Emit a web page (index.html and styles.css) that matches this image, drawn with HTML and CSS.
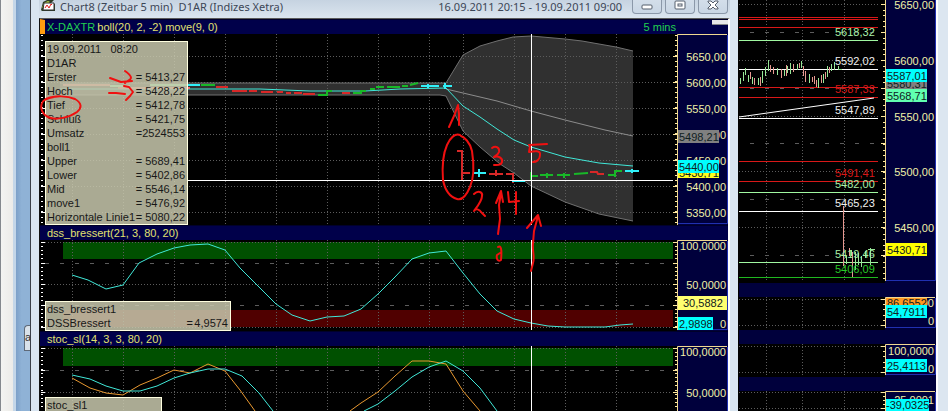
FILE: index.html
```
<!DOCTYPE html>
<html lang="de">
<head>
  <meta charset="UTF-8">
  <meta name="viewport" content="width=device-width, initial-scale=1.0">
  <title>Chart8</title>
  <link rel="stylesheet" href="styles.css">
</head>
<body>
  <div class="side-window"></div>
  <div class="desktop-gap"><span class="desktop-tab">a</span></div>

  <main class="chart-window">
    <header class="titlebar">
      <svg class="app-icon" width="16" height="12" viewBox="0 0 16 12">
        <path d="M1 10L3 2L7 0H14L11 3L15 4V11H2Z" fill="#2c3a24"/>
        <path d="M2 8L4 3L8 1L10 2L6 5Z" fill="#b9d84a"/>
        <path d="M4 3H14V10H3Z" fill="#fff" stroke="#333"/>
        <path d="M5 8L7 5L9 8L11 4L12 5" fill="none" stroke="#e02020"/>
      </svg>
      <h1 class="title">Chart8 (Zeitbar 5 min)&nbsp; D1AR (Indizes Xetra)</h1>
      <span class="range">16.09.2011 20:15 - 19.09.2011 09:00</span>
      <div class="window-buttons">
        <button class="window-btn" aria-label="Minimieren">
          <svg width="12" height="12" viewBox="0 0 12 12"><rect x="1" y="5" width="10" height="4" rx="1" fill="#fff" stroke="#555e6c"/></svg>
        </button>
        <button class="window-btn" aria-label="Maximieren">
          <svg width="12" height="12" viewBox="0 0 12 12"><rect x="1" y="1" width="10" height="8" rx="1" fill="#fff" stroke="#555e6c"/><rect x="4" y="4" width="4" height="2" fill="#fff" stroke="#555e6c"/></svg>
        </button>
        <button class="window-btn" aria-label="Schließen">
          <svg width="12" height="12" viewBox="0 0 12 12"><path d="M1 1H4L6 3L8 1H11V2L8 5L11 8V9H8L6 7L4 9H1V8L4 5L1 2Z" fill="#fff" stroke="#555e6c"/></svg>
        </button>
      </div>
    </header>

    <div class="workspace">
      <div class="panel-head panel-head-main">
        <span class="symbol">X-DAXTR</span>
        <span>boll(20, 2, -2) move(9, 0)</span>
        <span class="interval">5 mins</span>
        <span class="grip"></span>
      </div>
      <section class="panel">
        <svg class="plot" height="191" viewBox="40 34 637 191" preserveAspectRatio="none">
          <path class="band" d="M60 83H446L463 55L480 46L497 41L513 37L531 36L565 39L582 41L616 47L633 51V221L599 214L565 202L531 186L514 173L500 164L480 147L463 131L446 96L440 95H60Z"/>
          <path class="grid" d="M45 56.5H672M45 82.5H672M45 108.5H672M45 134.5H672M45 160.5H672M45 186.5H672M45 212.5H672"/>
          <path class="grid" d="M72.5 34V224M123.5 34V224M174.5 34V224M225.5 34V224M276.5 34V224M327.5 34V224M378.5 34V224M429.5 34V224M463.5 34V224M514.5 34V224M565.5 34V224M616.5 34V224"/>
          <path class="band-line" d="M60 83H446L463 55L480 46L497 41L513 37L531 36L565 39L582 41L616 47L633 51"/>
          <path class="band-line" d="M60 95H440L446 96L463 131L480 147L500 164L514 173L531 186L565 202L599 214L633 221"/>
          <path class="mid-line" d="M446 89L497 101L531 111L565 120L605 130L633 136"/>
          <path class="cyan" d="M60 89H260L310 91H365L400 89L446 88L463 106L480 117L497 129L514 140L531 147L565 157L599 163L633 166"/>
          <path d="M63 85H110M118 88H190" fill="none" stroke="#f07070" stroke-width="2"/>
          <path d="M110 86H130M150 85H188" fill="none" stroke="#80ffb0" stroke-width="2"/>
          <path class="bar-red" d="M216 87H228M232 91H240M240 91H247M249 91H257M261 92H273M277 92H283M286 93H291M294 93H302M303 94H315M342 93H350"/>
          <path class="bar-green" d="M201 85H215M318 95H327V91H332M353 93H361V91H366M370 89H375M376 87H384M387 87H400M402 86H408M410 85L418 83"/>
          <path class="bar-cyan" d="M188 85H200M421 86H439M443 86H452M428 84V88M445 83V89"/>
          <path class="bar-red" d="M457 151H463M462 151V180M463 173H470M489 174H503M496 170V176M506 174H513V183M590 172H597L598 174H604"/>
          <path class="bar-cyan" d="M473 173H486M479 169V177M512 181H525M625 171H639M632 169V173"/>
          <path class="bar-green" d="M531 180V172M531 176H538M540 175H553M547 173V178M557 175H570M564 173V178M574 174L588 173M608 175H615V171H622M615 170V177"/>
          <path class="white-line" d="M188 180.5H673"/>
          <path class="cursor" d="M531.5 34V225"/>
          <path class="tick tick-main" d="M42 35V225"/>
          <path class="tick" d="M41 56.5H45M41 82.5H45M41 108.5H45M41 134.5H45M41 160.5H45M41 186.5H45M41 212.5H45"/>
          <path class="tick-r tick-main" d="M676 35V225"/>
          <path class="tick-r" d="M673 56.5H677M673 82.5H677M673 108.5H677M673 134.5H677M673 160.5H677M673 186.5H677M673 212.5H677"/>
        </svg>
        <svg class="axis" width="51" height="191" viewBox="677 34 51 191">
          <path class="axis-frame" d="M677.5 225V34.5H727"/>
          <path class="axis-edge" d="M678 223.5H727.5V35"/>
          <text x="726" y="61">5650,00</text>
          <text x="726" y="87">5600,00</text>
          <text x="726" y="113">5550,00</text>
          <text x="726" y="139">5500,00</text>
          <text x="726" y="165">5450,00</text>
          <text x="726" y="191">5400,00</text>
          <text x="726" y="217">5350,00</text>
          <rect class="tag-gray" x="678" y="130" width="41" height="13"/>
          <text class="tag-text" x="679" y="141">5498,21</text>
          <rect class="tag-yellow" x="678" y="166" width="41" height="12"/>
          <text class="tag-text" x="679" y="177">5430,71</text>
          <rect class="tag-cyan" x="678" y="160" width="41" height="13"/>
          <text class="tag-text" x="679" y="171">5440,00</text>
        </svg>
        <table class="legend">
          <tr><td colspan="3">19.09.2011 &nbsp; 08:20</td></tr>
          <tr><td colspan="3">D1AR</td></tr>
          <tr><th>Erster</th><td>=</td><td>5413,27</td></tr>
          <tr><th>Hoch</th><td>=</td><td>5428,22</td></tr>
          <tr><th>Tief</th><td>=</td><td>5412,78</td></tr>
          <tr><th>Schluß</th><td>=</td><td>5421,75</td></tr>
          <tr><th>Umsatz</th><td>=</td><td>2524553</td></tr>
          <tr><td colspan="3">boll1</td></tr>
          <tr><th>Upper</th><td>=</td><td>5689,41</td></tr>
          <tr><th>Lower</th><td>=</td><td>5402,86</td></tr>
          <tr><th>Mid</th><td>=</td><td>5546,14</td></tr>
          <tr><th>move1</th><td>=</td><td>5476,92</td></tr>
          <tr><th>Horizontale Linie1</th><td>=</td><td>5080,22</td></tr>
        </table>
      </section>

      <div class="panel-head"><span>dss_bressert(21, 3, 80, 20)</span></div>
      <section class="panel">
        <svg class="plot" height="91" viewBox="40 240 637 91" preserveAspectRatio="none">
          <rect class="zone-high" x="63" y="242" width="610" height="17"/>
          <rect class="zone-low" x="63" y="310" width="610" height="17"/>
          <path class="grid" d="M45 242.5H672M45 284.5H672M45 327.5H672M72.5 240V330M123.5 240V330M174.5 240V330M225.5 240V330M276.5 240V330M327.5 240V330M378.5 240V330M429.5 240V330M463.5 240V330M514.5 240V330M565.5 240V330M616.5 240V330"/>
          <path class="grid-dash" d="M45 263.5H672M45 305.5H672"/>
          <path class="cyan" d="M72 275L88 280L106 289L123 285L139 263L157 254L174 248L190 245L208 244L225 250L240 268L259 287L276 304L292 315L310 321L327 317L344 316L361 309L378 294L395 277L412 259L429 253L446 251L463 273L480 294L497 311L514 319L531 323L548 326L565 327H605L620 325L633 324"/>
          <path class="cursor" d="M531.5 240V330"/>
          <path class="tick tick-sub" d="M42 242V330"/>
          <path class="tick" d="M41 242.5H45M41 263.5H45M41 284.5H45M41 305.5H45M41 327.5H45"/>
          <path class="tick-r tick-sub" d="M676 242V330"/>
          <path class="tick-r" d="M673 242.5H677M673 263.5H677M673 284.5H677M673 305.5H677M673 327.5H677"/>
        </svg>
        <svg class="axis" width="51" height="91" viewBox="677 240 51 91">
          <path class="axis-frame" d="M677.5 330V240.5H727"/>
          <path class="axis-edge" d="M678 329.5H727.5V241"/>
          <text x="726" y="250">100,0000</text>
          <text x="726" y="289">50,0000</text>
          <text x="726" y="328">0</text>
          <rect class="tag-pale" x="678" y="296" width="49" height="14"/>
          <text class="tag-text" x="683" y="307">30,5882</text>
          <rect class="tag-cyan" x="678" y="317" width="35" height="13"/>
          <text class="tag-text" x="679" y="328">2,9898</text>
        </svg>
        <table class="legend legend-dss">
          <tr><td colspan="3">dss_bressert1</td></tr>
          <tr><th>DSSBressert</th><td>=</td><td>4,9574</td></tr>
        </table>
      </section>

      <div class="panel-head"><span>stoc_sl(14, 3, 3, 80, 20)</span></div>
      <section class="panel">
        <svg class="plot" height="65" viewBox="40 346 637 65" preserveAspectRatio="none">
          <rect class="zone-high" x="63" y="348" width="610" height="18"/>
          <path class="grid" d="M45 348.5H672M45 392.5H672M72.5 346V411M123.5 346V411M174.5 346V411M225.5 346V411M276.5 346V411M327.5 346V411M378.5 346V411M429.5 346V411M463.5 346V411M514.5 346V411M565.5 346V411M616.5 346V411"/>
          <path class="grid-dash" d="M45 370.5H672"/>
          <path class="orange" d="M72 378L90 388L106 393L123 395L140 385L157 378L174 370L190 373L208 364L225 371L240 390L255 411M350 411L361 403L378 392L395 376L412 361H429L446 364L463 391L480 411"/>
          <path class="cyan" d="M72 375L90 379L106 386L123 391H140L157 386L174 378L190 373L208 369H225L242 376L259 393L273 411M364 411L378 404L395 391L412 377L429 367L446 361L463 371L480 388L497 411"/>
          <path class="cursor" d="M531.5 346V411"/>
          <path class="tick tick-sub" d="M42 348V411"/>
          <path class="tick" d="M41 348.5H45M41 370.5H45M41 392.5H45"/>
          <path class="tick-r tick-sub" d="M676 348V411"/>
          <path class="tick-r" d="M673 348.5H677M673 370.5H677M673 392.5H677"/>
        </svg>
        <svg class="axis" width="51" height="65" viewBox="677 346 51 65">
          <path class="axis-frame" d="M677.5 411V346.5H727"/>
          <path class="axis-edge" d="M727.5 347V411"/>
          <text x="726" y="356">100,0000</text>
          <text x="726" y="397">50,0000</text>
        </svg>
        <table class="legend legend-stoc">
          <tr><td>stoc_sl1</td></tr>
        </table>
      </section>

      <!-- freehand notes, drawn across all panels -->
      <svg class="notes" viewBox="40 19 637 392" preserveAspectRatio="none">
        <path d="M110 78L121 82L132 81M125 71C128 73 131 76 131 78C131 80 127 81 125 83"/>
        <path d="M109 93L116 93L125 94M124 86L129 87L133 92L130 96L126 100"/>
        <path d="M46 99C55 95 68 96 75 99C82 103 82 108 77 112C70 117 56 121 48 117C42 114 40 108 42 103C43 100 48 98 54 97"/>
        <path d="M449 127L454 116L458 105L459 114V125"/>
        <path d="M461 136C464 137 470 142 472 151C474 164 474 178 470 187C467 194 463 201 457 199C450 197 445 190 443 180C442 167 443 154 447 145C450 138 455 133 460 135"/>
        <path d="M492 148C496 145 500 148 499 152C498 155 495 156 494 157C499 155 503 159 502 162C501 166 496 165 494 165"/>
        <path d="M529 145L547 144M530 146L529 152C534 151 541 150 540 155C540 160 536 162 533 162"/>
        <path d="M474 194C478 190 483 192 482 196C482 201 477 207 474 211C476 208 479 209 482 213L485 216"/>
        <path d="M508 192L509 202L519 201M516 192L516 214"/>
        <path d="M496 203L501 191L503 202M501 193L499 205L500 219L498 234"/>
        <path d="M527 228L538 215L541 226M538 216L534 231L533 243C532 250 535 257 533 263L531 271"/>
        <path d="M498 247C501 245 502 249 501 260C498 262 496 259 497 255L500 253"/>
      </svg>
    </div>
  </main>

  <aside class="daily-window">
    <section class="panel">
      <svg class="level-plot" width="146" height="283" viewBox="739 0 146 283">
        <path class="grid" d="M739 4.5H880M739 60.5H880M739 116.5H880M739 171.5H880M739 227.5H880M766.5 0V281M802.5 0V281M844.5 0V281"/>
        <path class="grid-dash" d="M750 32.5H880M750 88.5H880M750 143.5H880M750 199.5H880M750 255.5H880"/>
        <path class="level-red" d="M739 17.5H878M739 19.5H878M739 27.5H878M739 87.5H878M739 97.5H878M739 161.5H878M739 181.5H878"/>
        <path class="level-white" d="M739 69.5H878M739 118.5H878M739 117L874 98M739 211.5H878"/>
        <path class="level-mint" d="M739 40.5H878M739 192.5H878M739 262.5H878"/>
        <path class="level-green" d="M739 277.5H878"/>
        <path class="bar-mint" d="M740.5 84V78M743.5 81V72M745.5 75V68M748.5 82V75M752.5 84V77M758.5 85V78M762.5 83V71M765.5 76V67M768.5 71V60M777.5 75V68M784.5 76V70M787.5 73V66M790.5 74V63M797.5 70V64M801.5 68V61M809.5 83V74M818.5 88V78M823.5 83V74M827.5 77V66M831.5 71V64M834.5 70V62M838.5 70V66M842 69.5H838"/>
        <path class="bar-pink" d="M750.5 79V72M754.5 85V78M760.5 86V77M770.5 72V65M773.5 74V67M781.5 78V69M786.5 76V65M793.5 72V64M799.5 68V63M803.5 76V66M805.5 82V71M812.5 82V77M814.5 84V76M816.5 87V80M821.5 83V75M825.5 79V72M829.5 73V67M843.5 206V266M849.5 256V248M852.5 277V252"/>
        <path class="bar-mint" d="M846.5 256V264M851.5 250V256M855.5 252V270M858.5 253V265M861.5 256V267M865.5 251V258M870.5 248V265M868 249.5H875"/>
        <text class="lvl lvl-mint" x="835" y="36">5618,32</text>
        <text class="lvl lvl-white" x="835" y="65">5592,02</text>
        <text class="lvl lvl-red" x="835" y="93">5587,33</text>
        <text class="lvl lvl-white" x="835" y="114">5547,89</text>
        <text class="lvl lvl-red" x="835" y="177">5491,41</text>
        <text class="lvl lvl-mint" x="835" y="188">5482,00</text>
        <text class="lvl lvl-white" x="835" y="207">5465,23</text>
        <text class="lvl lvl-mint" x="835" y="258">5419,46</text>
        <text class="lvl lvl-green" x="835" y="273">5406,09</text>
        <path class="tick-r tick-day" d="M884 4V281"/>
        <path class="tick-r" d="M881 4.5H885M881 32.5H885M881 60.5H885M881 88.5H885M881 116.5H885M881 143.5H885M881 171.5H885M881 199.5H885M881 227.5H885M881 255.5H885"/>
      </svg>
      <svg class="axis" width="51" height="283" viewBox="885 0 51 283">
        <path class="axis-frame" d="M885.5 0V281"/>
        <path class="axis-edge" d="M886 280.5H935.5V0"/>
        <text x="934" y="9">5650,00</text>
        <text x="934" y="65">5600,00</text>
        <text x="934" y="121">5550,00</text>
        <text x="934" y="176">5500,00</text>
        <text x="934" y="232">5450,00</text>
        <rect class="tag-gray" x="886" y="76" width="41" height="13"/>
        <text class="tag-text" x="887" y="88">5580,31</text>
        <rect class="tag-cyan" x="886" y="69" width="41" height="13"/>
        <text class="tag-text" x="887" y="80">5587,01</text>
        <rect class="tag-mint" x="886" y="89" width="41" height="13"/>
        <text class="tag-text" x="887" y="100">5568,71</text>
        <rect class="tag-bright" x="886" y="243" width="41" height="13"/>
        <text class="tag-text" x="887" y="254">5430,71</text>
      </svg>
    </section>
    <div class="spacer"></div>
    <section class="panel">
      <svg class="level-plot" width="146" height="33" viewBox="739 297 146 33">
        <path class="grid" d="M739 299.5H882M739 325.5H882M766.5 297V329M802.5 297V329M844.5 297V329"/>
        <path class="tick-r" d="M881 299.5H885M883 304.5H885M883 309.5H885M883 315.5H885M883 320.5H885M881 325.5H885"/>
      </svg>
      <svg class="axis" width="51" height="33" viewBox="885 297 51 33">
        <path class="axis-frame" d="M885.5 328V297.5H935"/>
        <path class="axis-edge" d="M886 327.5H935.5V298"/>
        <text x="934" y="307">100,0000</text>
        <text x="934" y="325">0</text>
        <rect class="tag-orange" x="886" y="298" width="41" height="12"/>
        <text class="tag-text" x="887" y="307">86,6552</text>
        <rect class="tag-cyan" x="886" y="305" width="41" height="13"/>
        <text class="tag-text" x="887" y="316">54,7911</text>
      </svg>
    </section>
    <div class="spacer"></div>
    <section class="panel">
      <svg class="level-plot" width="146" height="33" viewBox="739 344 146 33">
        <path class="grid" d="M739 346.5H882M739 372.5H882M766.5 344V376M802.5 344V376M844.5 344V376"/>
        <path class="tick-r" d="M881 346.5H885M883 351.5H885M883 356.5H885M883 362.5H885M883 367.5H885M881 372.5H885"/>
      </svg>
      <svg class="axis" width="51" height="33" viewBox="885 344 51 33">
        <path class="axis-frame" d="M885.5 375V344.5H935"/>
        <path class="axis-edge" d="M886 374.5H935.5V345"/>
        <text x="934" y="355">100,0000</text>
        <text x="934" y="373">0</text>
        <rect class="tag-cyan" x="886" y="359" width="41" height="13"/>
        <text class="tag-text" x="887" y="370">25,4113</text>
      </svg>
    </section>
    <div class="spacer"></div>
    <section class="panel">
      <svg class="level-plot" width="146" height="20" viewBox="739 391 146 20">
        <path class="grid" d="M739 392.5H882M739 408.5H882M766.5 391V411M802.5 391V411M844.5 391V411"/>
        <path class="tick-r" d="M881 392.5H885M883 396.5H885M883 400.5H885M883 404.5H885M881 408.5H885"/>
      </svg>
      <svg class="axis" width="51" height="20" viewBox="885 391 51 20">
        <path class="axis-frame" d="M885.5 411V391.5H935"/>
        <path class="axis-edge" d="M935.5 392V411"/>
        <text x="934" y="404">-25,0001</text>
        <rect class="tag-cyan" x="886" y="399" width="43" height="12"/>
        <text class="tag-text" x="886" y="409">-39,0325</text>
      </svg>
    </section>
  </aside>
</body>
</html>
```
FILE: styles.css
```
* {
  box-sizing: border-box;
}
body {
  margin: 0;
  min-height: 100vh;
  display: flex;
  overflow: hidden;
  background: #dce6f0;
  font-family: "Liberation Sans", Arial, sans-serif;
  font-size: 11px;
  line-height: 14px;
}
svg {
  display: block;
}

/* windows behind */
.side-window {
  width: 16px;
  flex: none;
  background: linear-gradient(90deg, #f4f4f2, #ecebe8);
  border-left: 1px solid #85898e;
  border-right: 3px solid #c4d6e8;
}
.desktop-gap {
  width: 14px;
  flex: none;
  display: flex;
  align-items: flex-end;
  justify-content: flex-end;
  padding-bottom: 60px;
  background: linear-gradient(90deg, #7da0c8, #8fb2d6 40%);
}
.desktop-tab {
  width: 6px;
  height: 26px;
  padding-top: 4px;
  overflow: hidden;
  background: #d9e2ea;
  border: 1px solid #5f6a78;
  border-right: none;
  border-radius: 4px 0 0 0;
  color: #333;
}

/* main window */
.chart-window {
  flex: 1;
  min-width: 0;
  display: flex;
  flex-direction: column;
  background: #d9e5f1;
  border-left: 1px solid #3a3f48;
  padding: 0 8px;
}
.titlebar {
  height: 18px;
  display: flex;
  align-items: flex-start;
  padding-left: 1px;
  background: linear-gradient(#c6d3e1, #dbe5ef);
  font-family: "Noto Sans", sans-serif;
  font-size: 11px;
  line-height: 14px;
  color: #3c4656;
}
.app-icon {
  margin-right: 4px;
}
.title {
  margin: 0;
  font-size: 11px;
  font-weight: normal;
  white-space: nowrap;
}
.range {
  margin-left: auto;
  margin-right: 10px;
  white-space: nowrap;
}
.window-buttons {
  display: flex;
  gap: 3px;
  margin-right: 2px;
}
.window-btn {
  width: 30px;
  height: 14px;
  padding: 0;
  display: flex;
  justify-content: center;
  background: linear-gradient(#d3deea, #c9d6e4);
  border: 1px solid #8b98a9;
  border-top: none;
  border-radius: 0 0 4px 4px;
}

.workspace {
  position: relative;
  flex: 1;
  background: #000;
  border-top: 1px solid #5a5a5a;
  border-left: 1px solid #111;
  border-right: 2px solid #fff;
}
.panel-head {
  height: 15px;
  display: flex;
  padding: 0 3px 0 7px;
  background: #00004a;
  border-top: 1px solid #00002a;
  color: #e0e070;
  white-space: nowrap;
}
.panel-head-main {
  padding-left: 2px;
  border-left: 5px solid #ff9c10;
}
.symbol {
  color: #20d050;
  margin-right: 2px;
}
.interval {
  margin-left: auto;
  margin-right: 36px;
  color: #20d050;
}
.grip {
  width: 16px;
  height: 5px;
  margin-right: -3px;
  background: #e8e8e8;
  border-bottom: 1px solid #888;
}
.panel {
  position: relative;
  display: flex;
  background: #000;
}
.plot {
  flex: 1;
  min-width: 0;
}
.axis {
  flex: none;
  background: #00003c;
}

/* chart parts */
.plot path, .level-plot path, .axis path {
  fill: none;
}
.plot .band {
  fill: #303030;
}
.band-line {
  stroke: #707070;
}
.mid-line {
  stroke: #8c8c8c;
}
.grid {
  stroke: #5c5c5c;
  stroke-dasharray: 1 2;
}
.grid-dash {
  stroke: #5c5c5c;
  stroke-dasharray: 4 11;
}
.cyan {
  stroke: #40e8d8;
}
.orange {
  stroke: #e89830;
}
.white-line {
  stroke: #fff;
}
.cursor {
  stroke: #fff;
}
.bar-red {
  stroke: #d82828;
  stroke-width: 2;
}
.bar-green {
  stroke: #18b828;
  stroke-width: 2;
}
.bar-cyan {
  stroke: #30f0f8;
  stroke-width: 2;
}
.bar-mint {
  stroke: #98e898;
}
.bar-pink {
  stroke: #e89890;
}
.zone-high {
  fill: #005000;
}
.zone-low {
  fill: #500000;
}
.tick {
  stroke: #fff;
}
.tick-r {
  stroke: #ffe8a0;
}
.tick-main, .tick-sub, .tick-day {
  stroke-width: 2;
}
.tick-main {
  stroke-dasharray: 1 4 1 4 1 4 1 4 1 5;
}
.tick-sub {
  stroke-dasharray: 1 3 1 3 1 3 1 3 1 4;
}
.tick-day {
  stroke-dasharray: 1 5 1 4 1 5 1 4 1 5;
}
.level-red {
  stroke: #d81818;
}
.level-white {
  stroke: #fff;
}
.level-mint {
  stroke: #a0f8a0;
}
.level-green {
  stroke: #20b820;
}
.lvl-red {
  fill: #d81818;
}
.lvl-white {
  fill: #f0f0f0;
}
.lvl-mint {
  fill: #a8f0a8;
}
.lvl-green {
  fill: #28c828;
}

/* price axis */
.axis text {
  fill: #f0f0a8;
  text-anchor: end;
}
.axis .tag-text {
  fill: #102020;
  text-anchor: start;
}
.axis-frame {
  stroke: #f0d890;
}
.axis-edge {
  stroke: #2030b0;
}
.tag-gray {
  fill: #808080;
}
.tag-yellow {
  fill: #ffff20;
}
.tag-bright {
  fill: #ffff00;
}
.tag-pale {
  fill: #ffff70;
}
.tag-cyan {
  fill: #00ffff;
}
.tag-mint {
  fill: #60ffb0;
}
.tag-orange {
  fill: #ff9820;
}

/* value boxes over the charts */
.legend {
  position: absolute;
  top: 7px;
  left: 5px;
  width: 143px;
  border: 1px solid #ffffe0;
  border-collapse: separate;
  border-spacing: 0;
  background: rgba(200, 200, 173, 0.85);
  color: #181818;
  white-space: nowrap;
}
.legend th, .legend td {
  height: 14px;
  padding: 0;
  font-weight: normal;
  text-align: left;
}
.legend th:first-child, .legend td:first-child {
  padding-left: 1px;
}
.legend td:last-child:not(:first-child) {
  width: 44px;
  padding-right: 2px;
  text-align: right;
}
.legend-dss {
  top: 61px;
  width: 186px;
}
.legend-dss td:nth-child(2) {
  text-align: right;
}
.legend-dss td:last-child:not(:first-child) {
  width: 37px;
}
.legend-stoc {
  top: 51px;
  width: 117px;
}
.notes {
  position: absolute;
  top: 0;
  left: 0;
  width: calc(100% - 51px);
  height: 100%;
  fill: none;
  stroke: #f01010;
  stroke-width: 2;
  stroke-linecap: round;
  stroke-linejoin: round;
  pointer-events: none;
}

/* right window */
.daily-window {
  flex: none;
  background: #000;
  border-left: 1px solid #000;
  border-right: 2px solid #fff;
  margin-right: 10px;
}
.spacer {
  height: 14px;
  background: #00003c;
}
```
